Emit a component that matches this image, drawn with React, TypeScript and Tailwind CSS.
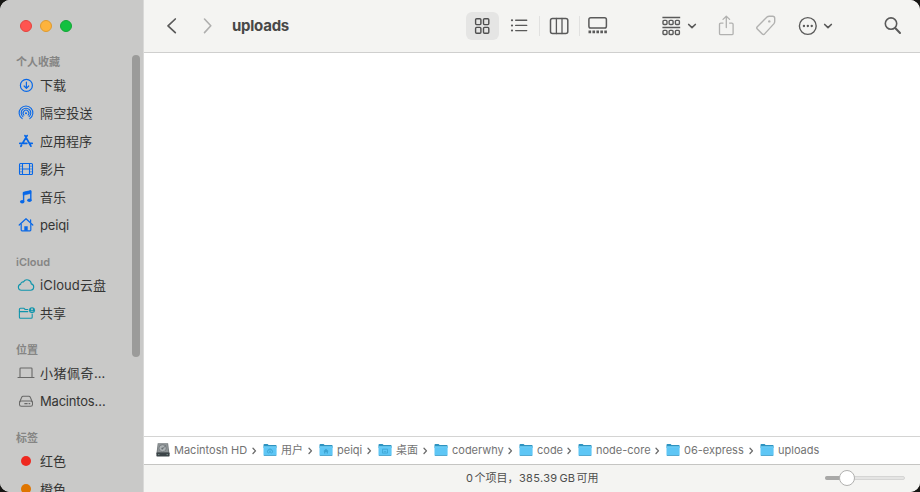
import type { ReactNode } from "react";

const FONT = "font-[Inter,'Noto_Sans_CJK_SC',sans-serif]";

function Line({ w, h, className = "", sw = 1.3, children }: { w: number; h: number; className?: string; sw?: number; children: ReactNode }) {
  return (
    <svg
      width={w}
      height={h}
      viewBox={`0 0 ${w} ${h}`}
      fill="none"
      stroke="currentColor"
      strokeWidth={sw}
      strokeLinecap="round"
      strokeLinejoin="round"
      className={`block shrink-0 ${className}`}
    >
      {children}
    </svg>
  );
}

const DownloadIcon = () => (
  <Line w={16} h={16} sw={1.2}>
    <circle cx="8.4" cy="8.4" r="6" />
    <path d="M8.4 5.2v6M6.1 9l2.3 2.3L10.7 9" />
  </Line>
);

const AirDropIcon = () => (
  <Line w={16} h={16} sw={1.1}>
    <path d="M4.2 13.6a6.9 6.9 0 1 1 7.6 0" />
    <path d="M4.9 11.7a4.8 4.8 0 1 1 6.2 0" />
    <path d="M5.9 10.1a2.9 2.9 0 1 1 4.2 0" />
    <circle cx="8" cy="8.2" r="1" fill="currentColor" stroke="none" />
  </Line>
);

const AppsIcon = () => (
  <Line w={16} h={16} sw={1.8}>
    <path d="M9.1 2.6L4.6 10.2M7 2.6l5.9 10.5M1.8 10.3h7M11.9 10.3h2.3M3.5 12.2l-.6 1" />
  </Line>
);

const MovieIcon = () => (
  <Line w={16} h={16} sw={1.1}>
    <rect x="1.5" y="2.5" width="13" height="11" rx="1" />
    <path d="M4.5 2.5v11M11.5 2.5v11M4.5 8h7" />
    <path d="M1.6 5.2h2.7M1.6 8h2.7M1.6 10.8h2.7M11.7 5.2h2.7M11.7 8h2.7M11.7 10.8h2.7" strokeWidth=".6" />
  </Line>
);

const MusicIcon = () => (
  <Line w={16} h={16} sw={1.4}>
    <path d="M5.6 12.7V3.8l7.2-1.6v8.8" />
    <path d="M5.6 3.2l7.2-1.7v2.9l-7.2 1.7z" fill="currentColor" strokeWidth=".6" />
    <ellipse cx="4.2" cy="12.7" rx="2.2" ry="1.8" fill="currentColor" stroke="none" />
    <ellipse cx="11.4" cy="11.2" rx="2.2" ry="1.8" fill="currentColor" stroke="none" />
  </Line>
);

const HomeIcon = () => (
  <Line w={16} h={16} sw={1.2}>
    <path d="M1.2 8L8 1.7 14.8 8M12.6 5.4V2.8" />
    <path d="M3.2 7v6c0 .5.2.8.8.8h8c.6 0 .8-.3.8-.8V7" />
    <path d="M6.3 13.8V9.2h3.4v4.6z" fill="currentColor" stroke="none" />
  </Line>
);

const CloudIcon = () => (
  <Line w={18} h={16} sw={1.1} className="-mx-px">
    <path d="M4.4 13.2a3.1 3.1 0 0 1-.7-6.1 2.4 2.4 0 0 1 2.8-2.2 4.2 4.2 0 0 1 7.8 2 3.2 3.2 0 0 1-.7 6.3z" />
  </Line>
);

const SharedIcon = () => (
  <Line w={18} h={16} sw={1.1} className="-mr-0.5">
    <path d="M9.8 4.5H7.2L6 3.3H2.4c-.6 0-1 .4-1 1v8c0 .6.4 1 1 1h10.8c.6 0 1-.4 1-1V9.4" />
    <path d="M1.4 6.6h8.4" />
    <circle cx="14" cy="5.2" r="3" fill="currentColor" stroke="none" />
    <circle cx="14" cy="4.2" r=".9" fill="#c9c9c8" stroke="none" />
    <path d="M12.5 7c.5-1.3 2.5-1.3 3 0" stroke="#c9c9c8" strokeWidth=".7" />
  </Line>
);

const LaptopIcon = () => (
  <Line w={18} h={16} sw={1.1} className="-mx-px">
    <path d="M3 12V3.8c0-.5.3-.8.8-.8h10.4c.5 0 .8.3.8.8V12" />
    <path d="M1 12.5h16" />
  </Line>
);

const DiskIcon = () => (
  <Line w={16} h={16} sw={1.05}>
    <path d="M1.6 9.3l2.1-5c.3-.7.7-1 1.4-1h5.8c.7 0 1.1.3 1.4 1l2.1 5" />
    <rect x="1.5" y="8" width="13" height="5.3" rx="1.8" />
    <path d="M6.4 10.7h3.2M10.6 10.7h1.6" strokeWidth="1.3" strokeLinecap="butt" />
  </Line>
);

const Dot = ({ className }: { className: string }) => (
  <span className="flex h-4 w-4 items-center justify-center">
    <span className={`h-[10px] w-[10px] rounded-full ${className}`} />
  </span>
);

type Entry = { label: string; icon: ReactNode; tracking?: string };

const groups: { title: string; color: string; entries: Entry[] }[] = [
  {
    title: "个人收藏",
    color: "text-[#0868e8]",
    entries: [
      { label: "下载", icon: <DownloadIcon /> },
      { label: "隔空投送", icon: <AirDropIcon />, tracking: "tracking-[0.15px]" },
      { label: "应用程序", icon: <AppsIcon /> },
      { label: "影片", icon: <MovieIcon /> },
      { label: "音乐", icon: <MusicIcon /> },
      { label: "peiqi", icon: <HomeIcon />, tracking: "tracking-[-0.15px]" },
    ],
  },
  {
    title: "iCloud",
    color: "text-[#1095ac]",
    entries: [
      { label: "iCloud云盘", icon: <CloudIcon />, tracking: "tracking-[0.12px]" },
      { label: "共享", icon: <SharedIcon /> },
    ],
  },
  {
    title: "位置",
    color: "text-[#686867]",
    entries: [
      { label: "小猪佩奇…", icon: <LaptopIcon />, tracking: "tracking-[0.5px]" },
      { label: "Macintos…", icon: <DiskIcon />, tracking: "tracking-[-0.2px]" },
    ],
  },
  {
    title: "标签",
    color: "",
    entries: [
      { label: "红色", icon: <Dot className="bg-[#ee281f]" /> },
      { label: "橙色", icon: <Dot className="bg-[#df7500]" /> },
    ],
  },
];

function Sidebar() {
  return (
    <aside className="relative flex h-full w-[144px] shrink-0 flex-col overflow-hidden border-r border-[#d9d9d8] bg-[#c9c9c8]">
      <div className="flex h-[39px] shrink-0 gap-2 pl-5 pt-5">
        <span className="h-3 w-3 rounded-full border border-[#e3443e] bg-[#ff5450]" />
        <span className="h-3 w-3 rounded-full border border-[#dd9a31] bg-[#fdb33c]" />
        <span className="h-3 w-3 rounded-full border border-[#13a637] bg-[#12c13f]" />
      </div>
      {groups.map((group) => (
        <section key={group.title} className="shrink-0">
          <h2 className="h-8 pl-4 pt-[14px] text-[11px] font-semibold leading-[18px] text-[#858584]">{group.title}</h2>
          {group.entries.map((entry) => (
            <div key={entry.label} className="flex h-7 items-center gap-[6px] pl-[18px]">
              <span className={group.color}>{entry.icon}</span>
              <span className={`whitespace-nowrap text-[13px] leading-7 text-[#353534] ${entry.tracking ?? ""}`}>{entry.label}</span>
            </div>
          ))}
        </section>
      ))}
      <div className="absolute left-[132px] top-[55px] h-[302px] w-2 rounded-full bg-[#9b9b9a]" />
    </aside>
  );
}

const Caret = ({ className = "" }: { className?: string }) => (
  <Line w={10} h={8} sw={1.7} className={`text-[#5a5a5a] ${className}`}>
    <path d="M1.7 2.5L5 5.6l3.3-3.1" />
  </Line>
);

function Toolbar() {
  return (
    <header className="flex h-[53px] shrink-0 items-center border-b border-[#cfcfce] bg-[#f4f4f2] text-[#5a5a5a]">
      <Line w={12} h={18} sw={1.7} className="ml-[22px]">
        <path d="M9.3 2L2 8.8l7.3 6.8" />
      </Line>
      <Line w={12} h={18} sw={1.6} className="ml-6 text-[#afafae]">
        <path d="M2.5 2l6.3 6.8-6.3 6.8" />
      </Line>
      <h1 className="ml-[18px] w-[234px] text-[15px] font-bold leading-[52px] tracking-[-0.25px] text-[#484847]">uploads</h1>
      <div className="flex h-7 w-[33px] items-center justify-center rounded-md bg-[#e5e5e4]">
        <Line w={17} h={18} sw={1.4} className="text-[#505050]">
          <rect x="1.6" y="1.7" width="5.3" height="5.9" rx="1" />
          <rect x="9.5" y="1.7" width="5.3" height="5.9" rx="1" />
          <rect x="1.6" y="10.4" width="5.3" height="5.9" rx="1" />
          <rect x="9.5" y="10.4" width="5.3" height="5.9" rx="1" />
        </Line>
      </div>
      <Line w={18} h={16} sw={1.4} className="ml-[11px]">
        <path d="M5.7 2.2h11M5.7 7.4h11M5.7 12.6h11" />
        <path d="M1.9 2.2h.2M1.9 7.4h.2M1.9 12.6h.2" strokeWidth="2" />
      </Line>
      <span className="ml-[11px] h-5 w-px bg-[#e1e1e0]" />
      <Line w={20} h={18} sw={1.5} className="ml-[9px]">
        <rect x="1.5" y="1.5" width="17.3" height="15" rx="2" />
        <path d="M7.4 1.5v15M13 1.5v15" strokeWidth="1.3" />
      </Line>
      <span className="ml-[10px] h-5 w-px bg-[#e1e1e0]" />
      <Line w={20} h={18} sw={1.5} className="ml-2">
        <rect x="0.9" y="0.8" width="17.5" height="10.3" rx="1.8" />
        <path d="M.5 14.8h18.6" strokeWidth="2.7" strokeDasharray="2.6 1.35" strokeLinecap="butt" />
      </Line>
      <Line w={19} h={20} sw={1.4} className="ml-[54px]">
        <path d="M.4 1.5h17.8M.4 11.5h17.8" strokeLinecap="butt" />
        {[1, 7.1, 13.4].map((x) => (
          <g key={x}>
            <rect x={x} y="4.4" width="4" height="4.1" rx="1" />
            <rect x={x} y="14.4" width="4" height="4.1" rx="1" />
          </g>
        ))}
      </Line>
      <Caret className="ml-[6px]" />
      <Line w={16} h={22} sw={1.3} className="ml-[21px] text-[#b1b1b0]">
        <path d="M5 8.1H2.8c-.8 0-1.3.5-1.3 1.3v9c0 .8.5 1.3 1.3 1.3h11c.8 0 1.3-.5 1.3-1.3v-9c0-.8-.5-1.3-1.3-1.3h-2.2" />
        <path d="M8.3 12.6V1.4M5 4.4l3.3-3.2 3.3 3.2" />
      </Line>
      <Line w={20} h={22} sw={1.4} className="ml-[22px] text-[#b1b1b0]">
        <path d="M1.3 11.8L11 2.1c.7-.7 1.3-.9 2.3-.9h3.3c1.3 0 2.1.8 2.1 2.1v3.1c0 1-.2 1.7-.9 2.5l-9.2 10c-.8.8-1.5.8-2.3 0l-5-4.9c-.8-.8-.8-1.4 0-2.2z" />
        <circle cx="13.3" cy="6.4" r="1.2" fill="currentColor" stroke="none" />
      </Line>
      <Line w={20} h={20} sw={1.4} className="ml-[22px]">
        <circle cx="9.8" cy="10" r="8.4" />
        <path d="M5.9 10h.1M9.8 10h.1M13.7 10h.1" strokeWidth="2.3" />
      </Line>
      <Caret className="ml-[5px]" />
      <Line w={18} h={20} sw={1.6} className="ml-[51px]">
        <circle cx="7" cy="7.6" r="5.7" />
        <path d="M11.2 12l4.8 5" strokeWidth="2" />
      </Line>
    </header>
  );
}

type FolderKind = "plain" | "users" | "home" | "desktop";

function Folder({ kind }: { kind: FolderKind }) {
  return (
    <svg width="14" height="14" viewBox="0 0 14 14" className="-mt-px block shrink-0">
      <path d="M.5 2c0-.6.3-.9.9-.9h3.2l1 .8h7.1c.6 0 .9.3.9.9v2H.5z" fill="#2e93c0" />
      <rect x=".5" y="3.5" width="13.1" height="9.3" rx=".8" fill="#5ec6f5" />
      <path d="M.7 3.8h12.7" stroke="#82d7f8" strokeWidth=".7" />
      <path d="M.9 12.5h12.3" stroke="#4a9fc6" strokeWidth=".8" />
      {kind === "users" && (
        <g fill="none" stroke="#3ba3d2">
          <path d="M5.4 10.3a2.4 2.4 0 1 1 3.2 0" />
          <path d="M7 7.5V10" strokeWidth="1.2" />
        </g>
      )}
      {kind === "home" && <path d="M4.3 8.3L7 5.8l2.7 2.5h-.8v2.2H7.6V9H6.4v1.5H5.1V8.3z" fill="#3ba3d2" />}
      {kind === "desktop" && (
        <path d="M4.5 6.2h5v3.9h-5zM5.8 8.7h2.4" fill="none" stroke="#3ba3d2" strokeWidth=".8" />
      )}
    </svg>
  );
}

function HardDrive() {
  return (
    <svg width="14" height="14" viewBox="0 0 14 14" className="-mt-px block shrink-0">
      <path d="M1.7.3h10.4l1.3 10H.5z" fill="#747a7d" />
      <path d="M2.3 1h9.2l.9 8.3H1.5z" fill="#8f9597" />
      <ellipse cx="6.6" cy="5.2" rx="3.7" ry="3.5" fill="#adb2b4" stroke="#686f73" strokeWidth=".7" />
      <circle cx="6.3" cy="5.6" r="1" fill="#6a7175" />
      <path d="M6.5 5.7l3.2-2.9" stroke="#5d6569" strokeWidth=".8" />
      <rect x=".4" y="9.5" width="13.2" height="4" rx=".7" fill="#3b4347" />
      <path d="M2 11.6h1.5M10.5 11.6H12" stroke="#89a6a0" strokeWidth=".7" />
    </svg>
  );
}

const crumbs: { label: string; icon: ReactNode; width: string }[] = [
  { label: "Macintosh HD", icon: <HardDrive />, width: "w-[107px]" },
  { label: "用户", icon: <Folder kind="users" />, width: "w-[56px]" },
  { label: "peiqi", icon: <Folder kind="home" />, width: "w-[59px]" },
  { label: "桌面", icon: <Folder kind="desktop" />, width: "w-[56px]" },
  { label: "coderwhy", icon: <Folder kind="plain" />, width: "w-[85px]" },
  { label: "code", icon: <Folder kind="plain" />, width: "w-[59px]" },
  { label: "node-core", icon: <Folder kind="plain" />, width: "w-[88px]" },
  { label: "06-express", icon: <Folder kind="plain" />, width: "w-[94px]" },
  { label: "uploads", icon: <Folder kind="plain" />, width: "w-[80px]" },
];

function PathBar() {
  return (
    <nav className="flex h-7 shrink-0 items-center border-t border-[#d4d4d3] bg-white pl-3">
      {crumbs.map((crumb, i) => (
        <div key={crumb.label} className={`flex shrink-0 items-center ${crumb.width}`}>
          {crumb.icon}
          <span className="ml-1 whitespace-nowrap text-[11px] leading-[27px] text-[#737373]">{crumb.label}</span>
          {i < crumbs.length - 1 && (
            <Line w={5} h={8} sw={1.3} className="ml-auto mr-[6px] text-[#696969]">
              <path d="M1 1.3L3.5 3.9 1 6.5" />
            </Line>
          )}
        </div>
      ))}
    </nav>
  );
}

function StatusBar() {
  return (
    <footer className="flex h-7 shrink-0 items-center border-t border-[#c5c5c3] bg-[#f4f4f2]">
      <p className="ml-[322px] w-[359px] whitespace-nowrap text-[11px] leading-[27px] text-[#4f4f4e]">
        0<span className="ml-[1.5px]">个项目，</span>
        <span className="ml-[0.5px] tracking-[0.35px]">385.39</span>
        <span className="ml-[2px]">GB</span>
        <span className="ml-[1.5px]">可用</span>
      </p>
      <div className="relative -mt-px h-1 w-20 rounded-full border border-[#d5d5d4] bg-[#e4e4e3]">
        <div className="-ml-px -mt-px h-1 w-4 rounded-l-full bg-[#a8a8a7]" />
        <div className="absolute -top-[7px] left-[13px] h-4 w-4 rounded-full border border-[#b0b0af] bg-white" />
      </div>
    </footer>
  );
}

export default function App() {
  return (
    <div className={`h-[492px] w-[920px] overflow-hidden bg-[#171614] ${FONT}`}>
      <div className="flex h-full w-full overflow-hidden rounded-[10px] bg-white">
        <Sidebar />
        <div className="flex min-w-0 flex-1 flex-col">
          <Toolbar />
          <main className="min-h-0 flex-1 bg-white" />
          <PathBar />
          <StatusBar />
        </div>
      </div>
    </div>
  );
}
